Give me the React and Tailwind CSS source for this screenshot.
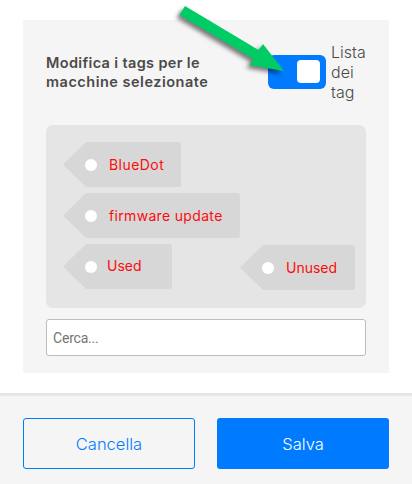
function Tag({ label, className = "", textClass = "" }) {
  return (
    <div className={`flex h-[45px] ${className}`}>
      <div className="w-[23px] shrink-0 bg-[#d7d7d7] [clip-path:polygon(100%_0,100%_100%,0_50%)]" />
      <div className="flex flex-1 items-center rounded-r-[3px] bg-[#d7d7d7]">
        <span className="-ml-px size-3 shrink-0 rounded-full bg-white relative" />
        <span className={`whitespace-nowrap text-[14px] leading-5 text-[#fb0d0d] ${textClass}`}>{label}</span>
      </div>
    </div>
  );
}

function Toggle() {
  return (
    <div className="mt-[35px] flex h-[34px] w-[58px] shrink-0 items-center justify-end rounded-[6px] bg-[#007bff] pr-[6px]">
      <div className="size-[23px] rounded-[4px] bg-white" />
    </div>
  );
}

function Arrow() {
  return (
    <svg className="absolute left-0 top-0 h-[120px] w-[412px] drop-shadow-[-3px_3px_2px_rgba(0,0,0,0.5)]" viewBox="0 0 412 120">
      <path d="M185 6 L258.500 50 L263 44 L284 71 L249.500 65 L253.500 59 L179.500 15 Z" fill="#00cc66" />
    </svg>
  );
}

export default function App() {
  return (
    <div className="relative flex h-[484px] w-[412px] flex-col overflow-hidden bg-white font-[Inter,sans-serif]">
      <main className="mx-[23px] mt-[19.5px] flex h-[353.5px] w-[366px] flex-col bg-[#f5f5f5] px-[23px]">
        <header className="flex h-[105.5px]">
          <h1 className="w-[222px] shrink-0 pt-[34.5px] text-[14.5px] font-semibold leading-[18.5px] text-[#4a4a4a]">
            <span className="block whitespace-nowrap tracking-[0.35px]">Modifica i tags per le</span>
            <span className="block whitespace-nowrap tracking-[0.5px]">macchine selezionate</span>
          </h1>
          <Toggle />
          <p className="ml-[5px] w-[35px] pt-[22.5px] text-[16px] font-light leading-5 text-[#4a4a4a]">
            Lista<br />dei<br />tag
          </p>
        </header>
        <section className="h-[183px] w-[320px] rounded-[7px] bg-[#e5e5e5] pl-[17px] pr-[11px] pt-[17px]">
          <Tag label="BlueDot" className="w-[118px]" textClass="ml-3 tracking-[0.45px]" />
          <Tag label="firmware update" className="mt-[6px] w-[177px]" textClass="ml-3 tracking-[0.33px]" />
          <div className="mt-[6px] flex justify-between">
            <Tag label="Used" className="w-[108.5px]" textClass="ml-[10px] -mt-px" />
            <Tag label="Unused" className="mt-px w-[115px]" textClass="ml-3" />
          </div>
        </section>
        <input
          className="mt-[11px] h-[37px] w-[320px] rounded-[3px] border border-[#bcbcbc] bg-white px-[6px] font-[Roboto,sans-serif] text-[14px] tracking-[-0.2px] placeholder:text-[#757575]"
          placeholder="Cerca..."
        />
      </main>
      <footer className="mt-5 flex h-[91px] gap-[22px] border-t-[3px] border-[#e5e5e5] bg-[#f5f5f5] px-[23px] pt-[22px] text-[16.5px] font-light">
        <button className="h-[51px] w-[172px] rounded-[3px] border border-[#007bff] pt-px text-[#007bff]">Cancella</button>
        <button className="h-[51px] w-[172px] rounded-[3px] bg-[#007bff] pt-px text-white">Salva</button>
      </footer>
      <Arrow />
    </div>
  );
}
